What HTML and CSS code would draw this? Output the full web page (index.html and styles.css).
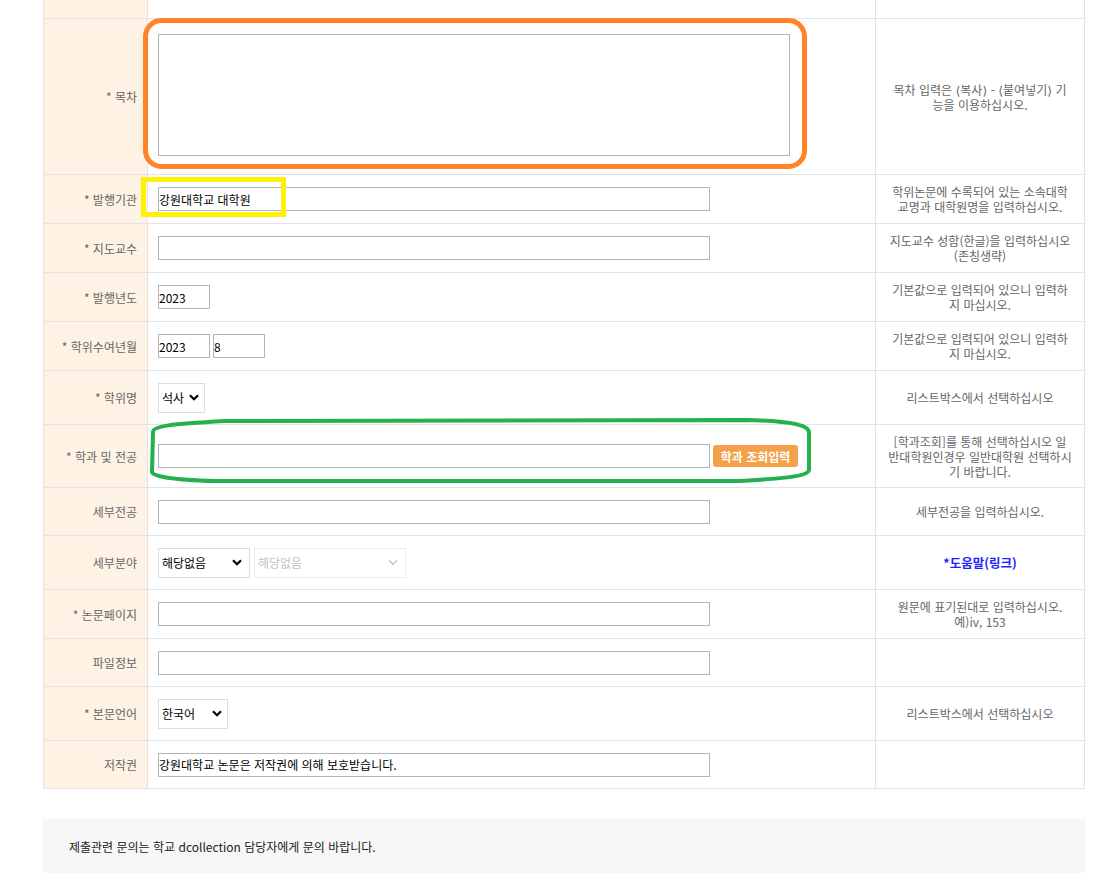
FILE: index.html
```html
<!DOCTYPE html>
<html lang="ko">
<head>
<meta charset="utf-8">
<title>학위논문 제출</title>
<link rel="stylesheet" href="styles.css">
</head>
<body>
<div class="page">
  <div class="form">
    <div class="row r-top">
      <div class="label"></div>
      <div class="field"></div>
      <div class="help"></div>
    </div>
    <div class="row r-toc">
      <div class="label">* 목차</div>
      <div class="field"><textarea class="ta"></textarea></div>
      <div class="help"><p class="note">목차 입력은 <span class="ab">⟨</span>복사<span class="ab">⟩</span> - <span class="ab">⟨</span>붙여넣기<span class="ab">⟩</span> 기<br>능을 이용하십시오.</p></div>
    </div>
    <div class="row r49">
      <div class="label">* 발행기관</div>
      <div class="field"><input class="txt wide" type="text" value="강원대학교 대학원"></div>
      <div class="help"><p class="note">학위논문에 수록되어 있는 소속대학<br>교명과 대학원명을 입력하십시오.</p></div>
    </div>
    <div class="row r49">
      <div class="label">* 지도교수</div>
      <div class="field"><input class="txt wide" type="text"></div>
      <div class="help"><p class="note">지도교수 성함(한글)을 입력하십시오<br>(존칭생략)</p></div>
    </div>
    <div class="row r49">
      <div class="label">* 발행년도</div>
      <div class="field"><input class="txt short" type="text" value="2023"></div>
      <div class="help"><p class="note">기본값으로 입력되어 있으니 입력하<br>지 마십시오.</p></div>
    </div>
    <div class="row r49">
      <div class="label">* 학위수여년월</div>
      <div class="field gap3"><input class="txt short" type="text" value="2023"><input class="txt short" type="text" value="8"></div>
      <div class="help"><p class="note">기본값으로 입력되어 있으니 입력하<br>지 마십시오.</p></div>
    </div>
    <div class="row r54">
      <div class="label">* 학위명</div>
      <div class="field"><select class="sel w47"><option>석사</option></select></div>
      <div class="help"><p class="note">리스트박스에서 선택하십시오</p></div>
    </div>
    <div class="row r63">
      <div class="label">* 학과 및 전공</div>
      <div class="field gap3"><input class="txt wide" type="text"><button class="btn" type="button">학과 조회입력</button></div>
      <div class="help"><p class="note">[학과조회]를 통해 선택하십시오 일<br>반대학원인경우 일반대학원 선택하시<br>기 바랍니다.</p></div>
    </div>
    <div class="row r48">
      <div class="label">세부전공</div>
      <div class="field"><input class="txt wide" type="text"></div>
      <div class="help"><p class="note">세부전공을 입력하십시오.</p></div>
    </div>
    <div class="row r54">
      <div class="label">세부분야</div>
      <div class="field gap4"><select class="sel w92"><option>해당없음</option></select><select class="sel w152" disabled><option>해당없음</option></select></div>
      <div class="help"><a class="link" href="#">*도움말(링크)</a></div>
    </div>
    <div class="row r49">
      <div class="label">* 논문페이지</div>
      <div class="field"><input class="txt wide" type="text"></div>
      <div class="help"><p class="note">원문에 표기된대로 입력하십시오.<br>예)iv, 153</p></div>
    </div>
    <div class="row r48">
      <div class="label">파일정보</div>
      <div class="field"><input class="txt wide" type="text"></div>
      <div class="help"></div>
    </div>
    <div class="row r54">
      <div class="label">* 본문언어</div>
      <div class="field"><select class="sel w70"><option>한국어</option></select></div>
      <div class="help"><p class="note">리스트박스에서 선택하십시오</p></div>
    </div>
    <div class="row r48">
      <div class="label">저작권</div>
      <div class="field"><input class="txt wide" type="text" value="강원대학교 논문은 저작권에 의해 보호받습니다."></div>
      <div class="help"></div>
    </div>
  </div>
  <div class="notice">제출관련 문의는 학교 dcollection 담당자에게 문의 바랍니다.</div>
</div>

<svg class="marks" width="1113" height="883" viewBox="0 0 1113 883" aria-hidden="true">
  <rect x="145.5" y="20.5" width="659" height="146" rx="16" ry="16" fill="none" stroke="#ff8427" stroke-width="5"/>
  <rect x="143.5" y="179.5" width="140" height="35" fill="none" stroke="#fff200" stroke-width="5"/>
  <path d="M153 432 C153 426 170 424 225 421 L745 420 C790 421 808 425 809 432 L809 470 C808 476 790 478 740 481 L215 481 C175 480 153 477 152 472 Z" fill="none" stroke="#22b14c" stroke-width="4" stroke-linejoin="round"/>
</svg>
</body>
</html>
```

FILE: styles.css
```css
* { box-sizing: border-box; }

html, body {
  margin: 0;
  padding: 0;
  background: #ffffff;
}

body {
  font-family: "Noto Sans CJK KR", "Noto Sans", sans-serif;
  font-size: 12px;
  color: #666666;
  position: relative;
  width: 1113px;
  height: 883px;
  overflow: hidden;
}

.page {
  padding-left: 43px;
}

.form {
  width: 1042px;
  border-left: 1px solid #e2e2e9;
}

.row {
  display: grid;
  grid-template-columns: 104px 728px 209px;
}

.row > div {
  border-right: 1px solid #e2e2e9;
  border-bottom: 1px solid #e2e2e9;
  display: flex;
  align-items: center;
}

.r-top { height: 19px; }
.r-toc { height: 156px; }
.r49 { height: 49px; }
.r48 { height: 48px; }
.r54 { height: 54px; }
.r63 { height: 63px; }

.label {
  background: #fdf2e3;
  justify-content: flex-end;
  padding-right: 10px;
  white-space: nowrap;
}

.field {
  padding-left: 10px;
}

.gap3 { gap: 3px; }
.gap4 { gap: 4px; }

.help {
  justify-content: center;
  padding: 0 4px;
}

.note {
  margin: 0;
  text-align: center;
  line-height: 15px;
  white-space: nowrap;
}

.ab {
  font-family: "DejaVu Sans", sans-serif;
  font-size: 12.5px;
  line-height: 12px;
}

.ta {
  width: 632px;
  height: 122px;
  margin: 0 0 3px 0;
  border: 1px solid #b5b5b5;
  resize: none;
  font-family: inherit;
}

.txt {
  height: 24px;
  border: 1px solid #b5b5b5;
  padding: 0;
  margin: 0;
  font-family: "Noto Sans CJK KR", "Noto Sans", sans-serif;
  font-size: 12px;
  color: #000000;
  background: #ffffff;
}

.wide { width: 552px; }
.short { width: 52px; }

.btn {
  width: 85px;
  height: 22px;
  border: none;
  border-radius: 3px;
  background: #f4a24a;
  color: #ffffff;
  font-family: "Noto Sans CJK KR", "Noto Sans", sans-serif;
  font-size: 12px;
  font-weight: bold;
  padding: 0;
}

.sel {
  appearance: none;
  -webkit-appearance: none;
  height: 30px;
  border: 1px solid #dcdcdc;
  border-radius: 0;
  background-color: #ffffff;
  background-image: url("data:image/svg+xml,%3Csvg xmlns='http://www.w3.org/2000/svg' viewBox='0 0 10 7'%3E%3Cpath d='M1 1.3L5 5.3L9 1.3' fill='none' stroke='%23000' stroke-width='2.2'/%3E%3C/svg%3E");
  background-repeat: no-repeat;
  background-size: 10px 7px;
  background-position: right 5px center;
  padding: 0 0 0 3px;
  font-family: "Noto Sans CJK KR", "Noto Sans", sans-serif;
  font-size: 12px;
  color: #000000;
  margin: 0;
}

.sel:disabled {
  color: #a8a8a8;
  border-color: #e6e6e6;
  background-image: url("data:image/svg+xml,%3Csvg xmlns='http://www.w3.org/2000/svg' viewBox='0 0 10 7'%3E%3Cpath d='M1 1.3L5 5.3L9 1.3' fill='none' stroke='%23aaa' stroke-width='1.4'/%3E%3C/svg%3E");
  background-position: right 7px center;
}

.w47 { width: 47px; }
.w92 { width: 92px; background-position: right 7px center; }
.w152 { width: 152px; }
.w70 { width: 70px; }

.link {
  color: #1f1fff;
  font-weight: bold;
  text-decoration: none;
  font-size: 12.5px;
}

.notice {
  margin-top: 30px;
  width: 1042px;
  height: 54px;
  background: #f7f7f7;
  display: flex;
  align-items: center;
  padding-left: 26px;
  color: #222222;
}

.marks {
  position: absolute;
  left: 0;
  top: 0;
  pointer-events: none;
}
```
